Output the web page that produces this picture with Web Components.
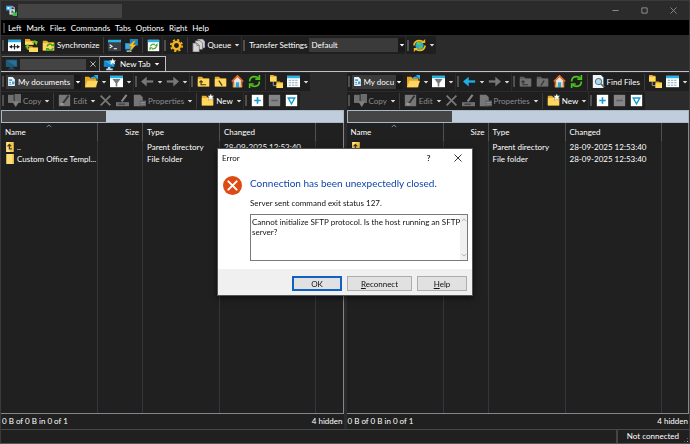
<!DOCTYPE html>
<html lang="en">
<head>
<meta charset="utf-8">
<title>File transfer</title>
<style>
html,body{margin:0;height:100%;background:#2b2b2b}
body{font:8px/12px Lato,"Open Sans",sans-serif;color:#fff;overflow:hidden}
</style>
</head>
<body>
<ftp-window></ftp-window>
<script>
const folder = (c = '#ffd75e', d = '#e9ae2c') => `<path fill="${d}" d="M1 2h5l2 2h7v10H1z"/><path fill="${c}" d="M1 5h14v9H1z"/>`;
const ICONS = {
  app: '<path fill="#2d9be0" d="M0 1h9v7H0z"/><path fill="#fff" d="M2 3h3v3H2z"/><path fill="#d5dde6" d="M5 6h8v8H5z"/><path d="M6 7V4q3-3 6 0v3" fill="none" stroke="#aeb8c2" stroke-width="1.6"/><path fill="#43464a" d="M8 8h2v4H8z"/><path fill="#35c043" d="M16 9v7H9l2.500-2.500L9 11l2-2 2.500 2.500z"/>',
  split: '<path fill="#fff" d="M0 1h16v14H0z"/><path fill="#27b4e4" d="M0 1h16v3H0z"/><path d="M8 6v7M2 9.500h12" stroke="#222" stroke-width="1.400" fill="none"/><path fill="#222" d="M5 7v5L1.500 9.500zM11 7v5l3.500-2.500z"/>',
  browse: '<path fill="#e8aa22" d="M0 0h6l1 2h4v5H0zM5 9h4l1 1h6v6H5z"/><path fill="#ffd95f" d="M0 3h10v4H0zM5 11h11v5H5z"/><path fill="none" stroke="#72c72b" stroke-width="2" d="M9 5q3-4 5-1M3 9q-1 3 2 4"/><path fill="#72c72b" d="M11 3h5l-2 5zM0 10h6L3 6z"/>',
  syncfolder: folder() + '<path fill="none" stroke="#3aa91f" stroke-width="2" d="M6 9q3-5 7-1M14 11q-3 5-7 1"/><path fill="#3aa91f" d="M11 9h4V5zM5 11v4l4-4z"/>',
  term: '<path fill="#3a4148" d="M0 1h16v14H0z"/><path fill="#27b4e4" d="M0 1h16v3H0z"/><path fill="none" stroke="#fff" stroke-width="1.300" d="M2 7l3 2-3 2M7 12h4"/>',
  bolt: '<path fill="#1786c9" d="M6 0h10v8H6zM0 5h10v8H0z"/><path fill="#34afe9" d="M1 6h8v6H1z"/><path fill="#9ac4dc" d="M2 14h6v2H2z"/><path fill="#ffc12b" stroke="#a86b00" stroke-width=".5" d="M11 2L4 9h4l-3 7 9-9h-4l3-5z"/>',
  syncbox: '<path fill="#fff" d="M1 1h14v14H1z"/><path fill="#27b4e4" d="M1 1h14v3H1z"/><path fill="none" stroke="#4cae31" stroke-width="1.700" d="M4 9q2-4 6-2M12 9q-2 4-6 3"/><path fill="#4cae31" d="M9 9h4V5zM3 10v4l4-4z"/>',
  gear: '<circle cx="8" cy="8" r="4.500" fill="none" stroke="#f3b41d" stroke-width="3"/><circle cx="8" cy="8" r="6.900" fill="none" stroke="#f3b41d" stroke-width="2.200" stroke-dasharray="2.700 2.720"/>',
  queue: '<g fill="#d5d5d5" stroke="#555" stroke-width=".8"><path d="M7 0h6l3 3v8H7z"/><path d="M4 2h6l3 3v8H4z"/><path d="M1 5h5l3 3v8H1z"/></g><path fill="none" stroke="#777" d="M6 5v3h3"/>',
  globe: '<circle cx="8" cy="8" r="5" fill="#23a9df"/><path fill="#66c73c" d="M5 4l4-1 1 3-2 2-3-1zM8 9l4-1-2 4-2 1z"/><path fill="none" stroke="#f5b91b" stroke-width="2" d="M1 8q1-6 7-6 3 0 5 2M15 8q-1 6-7 6-3 0-5-2"/><path fill="#f5b91b" d="M10 5h5V0zM1 16v-5h5z"/>',
  monitor: '<path fill="#1d5a7c" d="M1 2h14v9H1z"/><path fill="#2a7198" d="M2 3h12v7z"/><path fill="#294b5d" d="M6 11h4v2H6zM4 13h8v1H4z"/>',
  newtab: '<path fill="#1687c8" d="M1 3h13v8H1z"/><path fill="#35b5ee" d="M2 4h11v6z"/><path fill="#b7d9ea" d="M6 11h3v2H6zM4 13h8v2H4z"/><path fill="#fff" d="M12 0l1 3h3l-2 2 1 3-3-2-3 2 1-3-2-2h3z"/>',
  docs: '<path fill="#eef4f8" d="M2 0h8l4 4v12H2z"/><path fill="#3b9cd8" d="M4 4h5v3H4zM9 8h4v5H9zM4 9h3v2H4zM4 13h4v1H4z"/>',
  open: '<path fill="#e8a522" d="M0 2h5l2 2h7v11H0z"/><path fill="#ffd75e" d="M3 7h13l-3 8H0z"/><path fill="none" stroke="#2caee6" stroke-width="2" d="M7 5q2-3 6-2"/><path fill="#2caee6" d="M11 0h5v6z"/>',
  filter: '<path fill="#fff" d="M0 1h16v14H0z"/><path fill="#27b4e4" d="M0 1h16v3H0z"/><path fill="#787878" d="M3 5h10L9 10v4H7v-4z"/>',
  left: '<path fill="none" stroke="currentColor" stroke-width="2.800" d="M15 8H3"/><path fill="currentColor" d="M7 2v12L0 8z"/>',
  right: '<path fill="none" stroke="currentColor" stroke-width="2.800" d="M1 8h12"/><path fill="currentColor" d="M9 2v12l7-6z"/>',
  up: folder() + '<path fill="none" stroke="#443611" stroke-width="1.400" d="M5 7v5h6M3 9l2-2 2 2"/>',
  root: folder() + '<path stroke="#443611" stroke-width="1.500" d="M6 7l4 6"/>',
  upoff: folder('#6f6f6f', '#5d5d5d') + '<path fill="none" stroke="#333" stroke-width="1.400" d="M5 7v5h6M3 9l2-2 2 2"/>',
  rootoff: folder('#6f6f6f', '#5d5d5d') + '<path stroke="#333" stroke-width="1.500" d="M10 7l-4 6"/>',
  home: '<path fill="#e9e5dc" d="M3 7l5-5 5 5v8H3z"/><path fill="#c8772b" d="M2 8h2v7H2zM12 8h2v7h-2z"/><path fill="none" stroke="#ef6b2c" stroke-width="2" d="M1 8l7-7 7 7"/><path fill="#2ba5dc" d="M6 9h4v6H6z"/><path fill="#f5bd55" d="M3 13h3v2H3zM10 13h3v2h-3z"/>',
  refresh: '<path fill="none" stroke="#4cc61c" stroke-width="2" d="M2 8q0-6 6-6 3 0 5 2M14 8q0 6-6 6-3 0-5-2"/><path fill="none" stroke="#4cc61c" stroke-width="2" d="M14 0v5H9M2 16v-5h5"/>',
  tree: '<path fill="none" stroke="#aaa" d="M4 8v5h5"/><path fill="#e7ad29" d="M0 0h4l1 1h3v7H0zM8 8h4l1 1h3v7H8z"/><path fill="#ffd95f" d="M0 2h8v6H0zM8 10h8v6H8z"/>',
  table: '<path fill="#fff" d="M0 1h16v14H0z"/><path fill="#27b4e4" d="M0 1h16v3H0z"/><path stroke="#84a9b8" stroke-width="1.200" stroke-dasharray="3 1" d="M2 6.500h12M2 9.500h12M2 12.500h12"/>',
  find: '<path fill="#eef4f8" d="M1 0h10l3 3v13H1z"/><circle cx="8" cy="8" r="3.800" fill="#a9d8ef" stroke="#5c7480" stroke-width="1.300"/><path stroke="#5c7480" stroke-width="2" d="M11 11l4 4"/>',
  copy: '<path fill="#707070" d="M0 1h7v10H0z"/><path fill="#6b6b6b" d="M8 0h8v11H8z"/><path fill="#808080" d="M5 9h9l-4.500 7z"/>',
  edit: '<path fill="#777" d="M1 1h14v14H1z"/><path stroke="#333" stroke-width="2.200" d="M5 13l8-11"/><path fill="#999" d="M3 11h4v3H3z"/>',
  del: '<path stroke="#777" stroke-width="2.200" d="M2 2l12 12M14 2L2 14"/>',
  rename: '<path fill="#707070" d="M0 10h16v5H0z"/><path stroke="#888" stroke-width="2.500" d="M7 9l6-8"/><path stroke="#222" d="M3 12.500h8"/>',
  props: '<path fill="#777" d="M1 1h8l3 3v11H1z"/><path fill="#606060" d="M8 8h8v7H8z"/><path stroke="#999" d="M9 10.500h6M9 12.500h6"/>',
  newfolder: folder() + '<path fill="#fff" stroke="#555" stroke-width=".4" d="M12-1l1 3h3l-2 2 1 4-3-2-3 2 1-4-2-2h3z"/>',
  plus: '<path fill="#fff" d="M1 1h14v14H1z"/><path stroke="#149bd1" stroke-width="2" d="M8 4v8M4 8h8"/>',
  minus: '<path fill="#858585" d="M1 1h14v14H1z"/><path stroke="#606060" stroke-width="2" d="M4 8h8"/>',
  vee: '<path fill="#fff" d="M1 1h14v14H1z"/><path fill="none" stroke="#149bd1" stroke-width="1.700" d="M4 5h8L8 12z"/>',
  parent: '<path fill="#f5c74a" d="M2 0h12v16H2z"/><path fill="#ffe289" d="M2 0h6v16H2z"/><path fill="none" stroke="#4b3b12" stroke-width="2" d="M7 5v6h4M4 7l3-3 3 3"/>',
  folder: '<path fill="#ffdf74" d="M2 0h12v16H2z"/><path fill="#efbf47" d="M12 0h2v16h-2z"/>',
  error: '<circle cx="8" cy="8" r="8" fill="#de4a14"/><path stroke="#fff" stroke-width="1.700" stroke-linecap="round" d="M4.500 4.500l7 7M11.500 4.500l-7 7"/>',
  caret: '<path fill="currentColor" d="M2 5h12l-6 7z"/>',
  min: '<path stroke="currentColor" stroke-width="2" d="M1 8h14"/>',
  max: '<path fill="none" stroke="currentColor" stroke-width="2" d="M2 2h12v12H2z"/>',
  close: '<path stroke="currentColor" stroke-width="1.800" d="M1 1l14 14M15 1L1 15"/>',
  cup: '<path fill="none" stroke="currentColor" stroke-width="2" d="M2 11l6-6 6 6"/>',
  cdown: '<path fill="none" stroke="currentColor" stroke-width="2" d="M2 5l6 6 6-6"/>',
};

function define(name, render) {
  customElements.define(name, class extends HTMLElement {
    connectedCallback() {
      if (this.shadowRoot) return;
      this.attachShadow({ mode: 'open' }).innerHTML = render(this);
    }
  });
}

define('ui-icon', el => `<style>:host{display:block;flex:none;width:var(--size,13px);height:var(--size,13px)}svg{display:block;width:100%;height:100%}</style>
<svg viewBox="0 0 16 16" aria-hidden="true">${ICONS[el.getAttribute('name')] || ''}</svg>`);

define('tool-group', () => `<style>
:host{display:flex;align-items:center;height:18px;background:#1f1f1f;flex:none}
.grip{width:2px;height:11px;background:#505050;margin:0 2px 0 1px;flex:none}
</style><span class="grip"></span><slot></slot>`);

define('tool-sep', () => `<style>:host{display:block;flex:none;width:1px;height:16px;background:#3c3c3c;margin:0 2px}</style>`);

define('tool-button', el => {
  const a = n => el.getAttribute(n);
  return `<style>
:host{display:flex;flex:none;height:18px}
:host([off]){color:#8c8c8c}
button{display:flex;align-items:center;gap:2px;border:0;margin:0;padding:0 2px;background:none;color:inherit;font:inherit;white-space:nowrap}
.drop{padding:0 1px;--size:6px;color:#ddd}
</style>
<button type="button" aria-label="${a('tip') || a('label')}"><ui-icon name="${a('icon')}"></ui-icon>${a('label') ? `<span>${a('label')}</span>` : ''}</button>
${el.hasAttribute('drop') ? `<button class="drop" type="button" aria-label="${a('tip') || a('label')} options"><ui-icon name="caret"></ui-icon></button>` : ''}`;
});

define('drop-select', el => `<style>
:host{display:flex;align-items:center;height:14px;background:#3a3a3a;flex:none;--size:9px;overflow:hidden}
select{appearance:none;flex:1;min-width:0;width:0;height:14px;border:0;margin:0;padding:0 2px;background:none;color:#fff;font:inherit;text-overflow:clip}
.lead{margin-left:1px}
.arrow{display:grid;place-items:center;width:7px;height:14px;background:#191919;--size:6px}
</style>${el.hasAttribute('icon') ? `<ui-icon class="lead" name="${el.getAttribute('icon')}"></ui-icon>` : ''}
<select aria-label="${el.getAttribute('tip')}"><option>${el.getAttribute('value')}</option></select><span class="arrow"><ui-icon name="caret"></ui-icon></span>`);

define('file-panel', el => {
  const right = el.hasAttribute('remote');
  const off = right ? 'off' : '';
  return `<style>
:host{display:flex;flex-direction:column;min-width:0;overflow:hidden;background:#202020}
.bar{display:flex;gap:1px;height:19px;background:#2b2b2b;align-items:center}
drop-select{width:${right ? 51 : 75}px;margin-right:2px}
.path{display:flex;box-sizing:border-box;height:13px;background:#bfcddd;border:1px solid #aab8c8}
.path span{width:104px;background:#454545}
.list{flex:1;min-height:0;border:1px solid #85858d;border-width:0 1px 1px 0;overflow:hidden}
table{width:100%;height:100%;table-layout:fixed;border-collapse:separate;border-spacing:0}
th,td{font-weight:400;text-align:left;padding:0 0 0 4px;white-space:nowrap;overflow:hidden;border-right:1px solid #30383e}
th{border-color:#505050;height:18px;line-height:18px}
td{height:12px}
td:last-child,th:last-child{border:0}
.size{text-align:right;padding-right:3px}
tr.fill td{height:auto}
.name{display:flex;align-items:center;gap:2px;height:12px;--size:10px}
th:first-child div{display:flex;--size:6px}
th:first-child ui-icon{margin-left:20px;color:#aaa}
footer{display:flex;justify-content:space-between;padding:0 1px;height:15px;line-height:15px}
</style>
<div class="bar">
<tool-group><drop-select icon="docs" tip="Location" value="My documents"></drop-select><tool-button icon="open" tip="Open directory" drop></tool-button><tool-button icon="filter" tip="Filter" drop></tool-button></tool-group>
<tool-group><tool-button icon="left" tip="Back" drop style="color:${right ? '#20b0e8' : '#777'}"></tool-button><tool-button icon="right" tip="Forward" drop style="color:#777"></tool-button></tool-group>
<tool-group><tool-button icon="up${off}" tip="Parent directory"></tool-button><tool-button icon="root${off}" tip="Root directory"></tool-button><tool-button icon="home" tip="Home directory"></tool-button><tool-button icon="refresh" tip="Refresh"></tool-button><tool-sep></tool-sep>${right ? '<tool-button icon="find" label="Find Files"></tool-button><tool-sep></tool-sep>' : ''}<tool-button icon="tree" tip="Tree"></tool-button><tool-button icon="table" tip="View" drop></tool-button></tool-group>
</div>
<div class="bar">
<tool-group><tool-button icon="copy" label="Copy" drop off></tool-button><tool-sep></tool-sep><tool-button icon="edit" label="Edit" drop off></tool-button><tool-button icon="del" tip="Delete"></tool-button><tool-button icon="rename" tip="Rename"></tool-button><tool-button icon="props" label="Properties" drop off></tool-button><tool-sep></tool-sep><tool-button icon="newfolder" label="New" drop></tool-button></tool-group>
<tool-group><tool-button icon="plus" tip="Select"></tool-button><tool-button icon="minus" tip="Unselect"></tool-button><tool-button icon="vee" tip="Select by mask"></tool-button></tool-group>
</div>
<div class="path"><span></span></div>
<div class="list"><table>
<colgroup><col style="width:97px"><col style="width:45px"><col style="width:77px"><col style="width:96px"><col></colgroup>
<thead><tr><th><div>Name<ui-icon name="cup"></ui-icon></div></th><th class="size">Size</th><th>Type</th><th>Changed</th><th></th></tr></thead>
<tbody><tr><td><div class="name"><ui-icon name="parent"></ui-icon>..</div></td><td></td><td>Parent directory</td><td>28-09-2025 12:53:40</td><td></td></tr>
<tr><td><div class="name"><ui-icon name="folder"></ui-icon>Custom Office Templ...</div></td><td></td><td>File folder</td><td>28-09-2025 12:53:40</td><td></td></tr>
<tr class="fill"><td></td><td></td><td></td><td></td><td></td></tr></tbody></table></div>
<footer><span>0 B of 0 B in 0 of 1</span><span>4 hidden</span></footer>`;
});

define('error-dialog', () => `<style>
:host{display:block;width:256px;background:#fff;color:#111;border:1px solid #555;box-sizing:border-box;box-shadow:0 2px 6px #0009}
header{display:flex;align-items:center;height:17px;padding:0 9px 0 4px}
header span{flex:1}
header button{border:0;background:none;padding:0;margin:0;width:29px;display:grid;place-items:center;color:#222;font:inherit;font-weight:700;--size:8px}
header button:last-child{width:10px;margin-left:10px}
main{display:grid;grid-template-columns:19px 1fr;column-gap:8px;padding:9px 4px 8px 5px}
main>ui-icon{--size:19px;grid-row:span 3;margin-top:1px}
h1{margin:1px 0 7px;font-size:10px;line-height:14px;font-weight:400;color:#0f46a8}
p{margin:0 0 5px;line-height:12px}
.box{position:relative;display:flex;height:45px;border:1px solid #7a7a7a}
textarea{flex:1;min-width:0;box-sizing:border-box;resize:none;border:0;margin:0;padding:2px 0 0 1px;font:inherit;line-height:10px;color:#111;background:#fff;overflow:hidden;outline:0}
.scroll{position:absolute;top:0;right:0;bottom:0;width:7px;background:#f0f0f0;display:flex;flex-direction:column;justify-content:space-between;align-items:center;padding:2px 0;color:#999;--size:6px}
footer{display:flex;justify-content:flex-end;gap:5px;background:#f0f0f0;padding:7px 5px 4px}
footer button{box-sizing:border-box;width:50px;height:15px;border:1px solid #adadad;background:#e1e1e1;padding:0;margin:0;color:#111;font:inherit}
footer .ok{border:2px solid #0f62c4}
footer .wide{width:65px}
</style>
<header><span>Error</span><button type="button" aria-label="Help">?</button><button type="button" aria-label="Close"><ui-icon name="close"></ui-icon></button></header>
<main><ui-icon name="error"></ui-icon><h1>Connection has been unexpectedly closed.</h1><p>Server sent command exit status 127.</p>
<div class="box"><textarea readonly aria-label="Details">Cannot initialize SFTP protocol. Is the host running an SFTP server?</textarea><span class="scroll"><ui-icon name="cup"></ui-icon><ui-icon name="cdown"></ui-icon></span></div></main>
<footer><button type="button" class="ok">OK</button><button type="button" class="wide"><u>R</u>econnect</button><button type="button"><u>H</u>elp</button></footer>`);

define('ftp-window', () => `<style>
:host{display:flex;flex-direction:column;height:100vh;box-sizing:border-box;border:1px solid #3a3a3a;border-bottom-color:#555;background:#2b2b2b}
.title{display:flex;align-items:center;height:19px;padding:0 11px 0 5px;--size:11px}
.redact{width:104px;height:14px;background:#444;margin-left:1px}
.title .redact{margin-right:auto}
.title button{border:0;background:none;padding:0;width:8px;margin-left:21px;color:#999;--size:7px}
nav{display:flex;height:15px;background:#000;padding-left:2px;gap:5px;align-items:center}
nav i{width:2px;height:10px;background:#3c3c3c;margin-right:-2px}
nav button{border:0;background:none;color:#fff;font:inherit;padding:0}
.tools{display:flex;gap:1px;height:18px;align-items:center;margin-top:1px}
.tools label{padding:0 2px}
drop-select{width:96px}
.tabs{display:flex;height:15px;margin-top:2px;padding-left:1px;border-bottom:1px solid #c4bfc6}
.tab{display:flex;align-items:center;gap:2px;box-sizing:border-box;background:#202020;border:1px solid #777;border-width:1px 1px 0 0;padding:0 3px;color:#fff;font:inherit}
.tab .redact{width:66px;height:11px;margin:0 2px 0 0}
.tab.on{border-color:#c4bfc6;gap:4px;padding:0 5px 0 3px}
.x{--size:6px}
.panels{flex:1;min-height:0;display:grid;grid-template-columns:1fr 1fr;gap:3px}
.status{display:flex;height:13px;background:#202020;border-top:1px solid #484848}
.status span:first-child{flex:1}
.conn{border-left:2px solid #444;padding:0 4px 0 9px}
.size{align-self:end;width:6px;height:6px;background:radial-gradient(#aaa 1px,transparent 1px) 0 0/3px 3px;clip-path:polygon(100% 0,100% 100%,0 100%)}
.over{position:fixed;inset:0;display:grid;place-items:center}
</style>
<header class="title"><ui-icon name="app"></ui-icon><span class="redact"></span><button type="button" aria-label="Minimize"><ui-icon name="min"></ui-icon></button><button type="button" aria-label="Maximize"><ui-icon name="max"></ui-icon></button><button type="button" aria-label="Close"><ui-icon name="close"></ui-icon></button></header>
<nav><i></i>${['Left','Mark','Files','Commands','Tabs','Options','Right','Help'].map(t => `<button type="button">${t}</button>`).join('')}</nav>
<div class="tools">
<tool-group><tool-button icon="split" tip="Compare"></tool-button><tool-button icon="browse" tip="Synchronized browsing"></tool-button><tool-button icon="syncfolder" label="Synchronize"></tool-button><tool-sep></tool-sep><tool-button icon="term" tip="Console"></tool-button><tool-button icon="bolt" tip="Terminal"></tool-button><tool-sep></tool-sep><tool-button icon="syncbox" tip="Keep up to date"></tool-button></tool-group>
<tool-group><tool-button icon="gear" tip="Preferences"></tool-button><tool-sep></tool-sep><tool-button icon="queue" label="Queue" drop></tool-button></tool-group>
<tool-group><label>Transfer Settings</label><drop-select tip="Transfer Settings" value="Default"></drop-select></tool-group>
<tool-group><tool-button icon="globe" tip="Synchronize sites" drop></tool-button></tool-group>
</div>
<div class="tabs"><div class="tab"><ui-icon name="monitor"></ui-icon><span class="redact"></span><ui-icon class="x" name="close"></ui-icon></div><button type="button" class="tab on"><ui-icon name="newtab"></ui-icon>New Tab<ui-icon class="x" name="caret"></ui-icon></button></div>
<div class="panels"><file-panel></file-panel><file-panel remote></file-panel></div>
<div class="status"><span></span><span class="conn">Not connected</span><span class="size"></span></div>
<div class="over"><error-dialog role="dialog" aria-label="Error"></error-dialog></div>`);
</script>
</body>
</html>
